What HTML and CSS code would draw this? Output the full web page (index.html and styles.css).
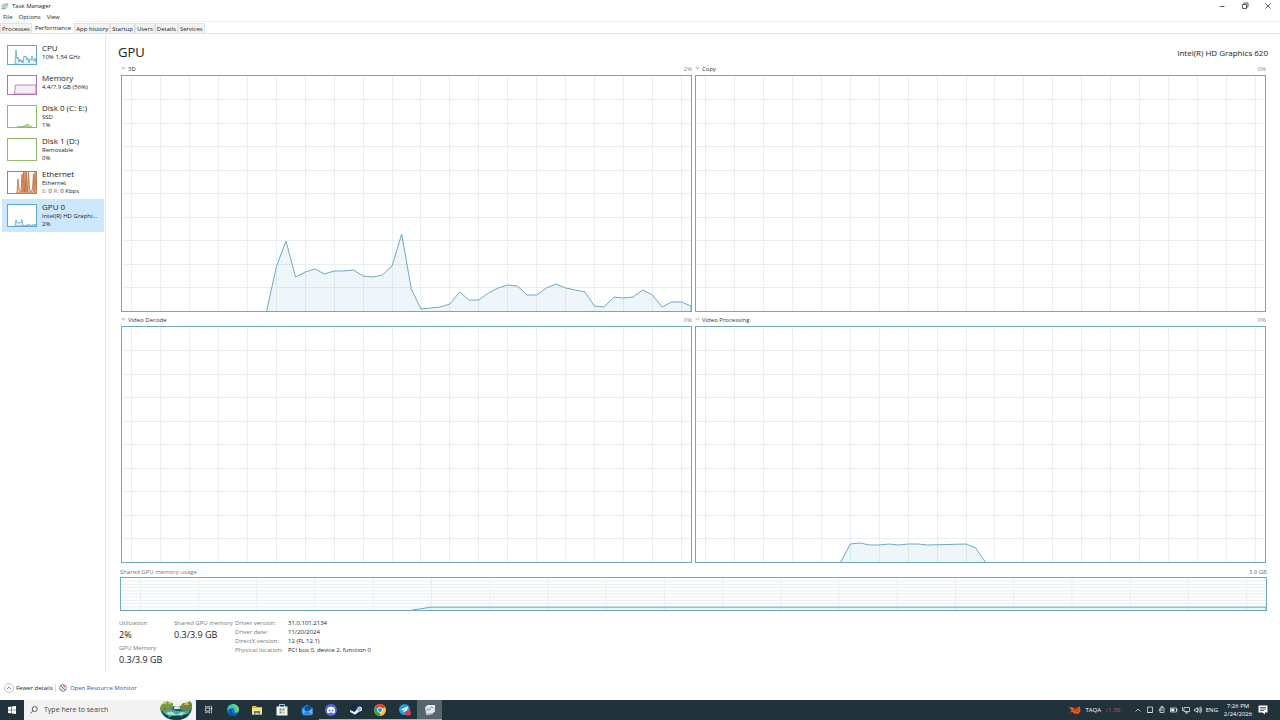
FILE: index.html
```html
<!DOCTYPE html>
<html lang="en">
<head>
<meta charset="utf-8">
<title>Task Manager</title>
<link rel="stylesheet" href="styles.css">
</head>
<body>

<!-- shared chart grid: 59 intervals wide, 10 rows high -->
<svg class="defs" aria-hidden="true">
	<symbol id="grid" viewBox="0 0 59 235" preserveAspectRatio="none">
		<path class="grid-line" d="M1 0v235M4 0v235M7 0v235M10 0v235M13 0v235M16 0v235M19 0v235M22 0v235M25 0v235M28 0v235M31 0v235M34 0v235M37 0v235M40 0v235M43 0v235M46 0v235M49 0v235M52 0v235M55 0v235M58 0v235"/>
		<path class="grid-line" d="M0 23.5h59M0 47h59M0 70.5h59M0 94h59M0 117.5h59M0 141h59M0 164.5h59M0 188h59M0 211.5h59"/>
	</symbol>
</svg>

<header class="titlebar">
	<svg class="app-icon" viewBox="0 0 18 16"><path d="M2 7l4-4h10l-3 9H3z" fill="#e3e9ec" stroke="#77858c"/><path d="M4 9l3-3 2 3 3-5 2 2" fill="none" stroke="#3c8fae" stroke-width="1.4"/><path d="M1 14h9" stroke="#77858c" stroke-width="2"/></svg>
	<h1>Task Manager</h1>
	<div class="window-buttons">
		<button aria-label="Minimize"><svg viewBox="0 0 8 8"><path d="M1.5 4.5h5"/></svg></button>
		<button aria-label="Restore"><svg viewBox="0 0 8 8"><path d="M1.5 2.5h4v4h-4zM3 2.500V1h4v4H5.500"/></svg></button>
		<button aria-label="Close"><svg viewBox="0 0 8 8"><path d="M1.500 1.500l5 5M6.500 1.500l-5 5"/></svg></button>
	</div>
</header>

<nav class="menu">
	<button>File</button>
	<button>Options</button>
	<button>View</button>
</nav>

<nav class="tabs">
	<button>Processes</button>
	<button class="active">Performance</button>
	<button>App history</button>
	<button>Startup</button>
	<button>Users</button>
	<button>Details</button>
	<button>Services</button>
</nav>

<main>
	<aside class="sidebar">
		<button class="device cpu">
			<svg class="thumb" viewBox="0 0 28 18" preserveAspectRatio="none"><path d="M7 18L8 4l1 9 1-2 1 5 1-3 1 3 1-2 1 3 1-7 1 1 1-1 1 4 1-2 1 5 1-4 1 1 1-4 1 4 1 1 1-3 1 4 1-2v6z"/></svg>
			<span class="info"><strong>CPU</strong><span>10% 1.54 GHz</span></span>
		</button>
		<button class="device memory">
			<svg class="thumb" viewBox="0 0 28 18" preserveAspectRatio="none"><path d="M6.500 18l1-9H28v9z"/></svg>
			<span class="info"><strong>Memory</strong><span>4.4/7.9 GB (56%)</span></span>
		</button>
		<button class="device disk">
			<svg class="thumb" viewBox="0 0 28 21" preserveAspectRatio="none"><path d="M9 21l2-1 2 1 3-1 1-1 1 1 1-2 2 1 1 1 2 1z"/></svg>
			<span class="info"><strong>Disk 0 (C: E:)</strong><span>SSD</span><span>1%</span></span>
		</button>
		<button class="device disk">
			<svg class="thumb" viewBox="0 0 28 21"></svg>
			<span class="info"><strong>Disk 1 (D:)</strong><span>Removable</span><span>0%</span></span>
		</button>
		<button class="device ethernet">
			<svg class="thumb" viewBox="0 0 28 21" preserveAspectRatio="none"><path d="M9 21l1-14 1 10 2 3 1-18 1 18 .500-20 1 20 .500-20 1 20 .500-20 1 20 1-20 1 17 1 3 2-3 1-15 .500 18 1-20 1 18 1 3z"/></svg>
			<span class="info"><strong>Ethernet</strong><span>Ethernet</span><span><i>S:</i> 0 <i>R:</i> 0 Kbps</span></span>
		</button>
		<button class="device gpu selected">
			<svg class="thumb" viewBox="0 0 28 21" preserveAspectRatio="none"><path d="M7 21l1-6 1 3 4-.500 1-3 1 6 2 .500 2-1 3-.500 1 1 3-1 2 .500v1z"/></svg>
			<span class="info"><strong>GPU 0</strong><span>Intel(R) HD Graphi...</span><span>2%</span></span>
		</button>
	</aside>

	<section class="details">
		<div class="heading">
			<h2>GPU</h2>
			<span>Intel(R) HD Graphics 620</span>
		</div>

		<div class="charts">
			<figure>
				<figcaption><button>3D</button><span>2%</span></figcaption>
				<svg class="chart" viewBox="0 0 59 235" preserveAspectRatio="none">
					<use href="#grid" width="59" height="235"/>
					<path class="series" d="M15 240V235L16 191L17 165L18 201L19 196L20 193L21 198L22 195L23 195L24 194L25 200L26 201L27 199L28 190L29 158L30 213L31 233L32 232L33 231L34 228L35 216L36 224L37 224L38 217L39 212L40 209L41 210L42 219L43 219L44 212L45 208L46 212L47 214L48 216L49 230L50 231L51 221L52 222L53 221L54 214L55 219L56 231L57 226L58 226L59 230V240z"/>
				</svg>
			</figure>
			<figure>
				<figcaption><button>Copy</button><span>0%</span></figcaption>
				<svg class="chart" viewBox="0 0 59 235" preserveAspectRatio="none">
					<use href="#grid" width="59" height="235"/>
				</svg>
			</figure>
			<figure>
				<figcaption><button>Video Decode</button><span>0%</span></figcaption>
				<svg class="chart" viewBox="0 0 59 235" preserveAspectRatio="none">
					<use href="#grid" width="59" height="235"/>
				</svg>
			</figure>
			<figure>
				<figcaption><button>Video Processing</button><span>0%</span></figcaption>
				<svg class="chart" viewBox="0 0 59 235" preserveAspectRatio="none">
					<use href="#grid" width="59" height="235"/>
					<path class="series" d="M15 240V235L16 217L17 216L18 218L19 218L20 217L21 218L22 217L23 217L24 218L28 217L29 221L30 235V240z"/>
				</svg>
			</figure>
		</div>

		<figure class="shared">
			<figcaption><span>Shared GPU memory usage</span><span>3.9 GB</span></figcaption>
			<svg class="chart" viewBox="0 0 59 235" preserveAspectRatio="none">
				<use href="#grid" width="59" height="235"/>
				<path class="series" d="M15 260V235L16 214H59V260z"/>
			</svg>
		</figure>

		<div class="stats">
			<dl class="figures">
				<dt>Utilization</dt>
				<dd>2%</dd>
				<dt>GPU Memory</dt>
				<dd>0.3/3.9 GB</dd>
			</dl>
			<dl class="figures">
				<dt>Shared GPU memory</dt>
				<dd>0.3/3.9 GB</dd>
			</dl>
			<dl class="driver">
				<dt>Driver version:</dt><dd>31.0.101.2134</dd>
				<dt>Driver date:</dt><dd>11/20/2024</dd>
				<dt>DirectX version:</dt><dd>12 (FL 12.1)</dd>
				<dt>Physical location:</dt><dd>PCI bus 0, device 2, function 0</dd>
			</dl>
		</div>
	</section>
</main>

<footer class="bottom">
	<button><svg viewBox="0 0 20 20"><circle cx="10" cy="10" r="9" fill="#fff" stroke="#8b8b8b"/><path d="M6 12l4-4 4 4" fill="none" stroke="#666" stroke-width="1.500"/></svg>Fewer details</button>
	<a href="#"><svg viewBox="0 0 20 20"><circle cx="10" cy="10" r="7" fill="#eef1f3" stroke="#8f9aa0" stroke-width="2"/><path d="M5 5l9 9M10 5l4 3" stroke="#c0413f" stroke-width="2"/><path d="M5 11l4 4" stroke="#6a93ad" stroke-width="2"/></svg>Open Resource Monitor</a>
</footer>

<div class="taskbar">
	<button class="start" aria-label="Start"><svg viewBox="0 0 16 16"><path fill="#fff" d="M0 2l7-1v6.500H0zM8 1l8-1v7.500H8zM0 8.500h7V15l-7-1zM8 8.500h8V16l-8-1z"/></svg></button>
	<label class="search">
		<svg class="glass" viewBox="0 0 16 16"><circle cx="9.500" cy="6" r="5"/><path d="M6 9.500L1 15"/></svg>
		<input type="text" placeholder="Type here to search" aria-label="Search">
		<svg class="lagoon" viewBox="0 0 34 20">
			<path d="M1 8q16-4 32 0q-2 12-16 12Q3 20 1 8z" fill="#17606a"/>
			<path d="M3 10q6-3 12 0t16-1l-2 5q-12 4-23 1z" fill="#43a7a2"/>
			<path d="M7 13q5-3 8 0t7-1l5 1-4 2H9z" fill="#a8ddd0"/>
			<path d="M3 12q5 5 13 4t14-2q-4 6-13 6Q7 19 3 12z" fill="#153e43"/>
			<path d="M1 8q1-5 5-4l2-3 3 2 3 0 0 5-4 2-8 1z" fill="#789c43"/>
			<path d="M21 7l3-4 4 0 3-2 2 3v5l-5 2-6-1z" fill="#638c3e"/>
			<path d="M3 4l3-3 2 3M9 4l3-3 1 3M25 5l3-4 2 4" fill="#d6b65d"/>
			<path d="M4 8l3-1v3l-3 1zM10 6l3 2-2 2zM26 7l3-1v4h-3z" fill="#9b6a3b"/>
			<path d="M15 7q2-2 6 0v2h-6z" fill="#d6e7db"/>
			<path d="M9 17l3-1M21 16l3-1" stroke="#5db574"/>
		</svg>
	</label>
	<div class="apps">
		<button aria-label="Task View"><svg viewBox="0 0 24 24"><path d="M4 2v3h11V2M4 22v-3h11v3M4 8h11v8H4zM20 2v5M20 11v11" fill="none" stroke="#dfe5e8" stroke-width="2"/><path d="M18 7h4v4h-4z" fill="#fff"/></svg></button>
		<button aria-label="Edge"><svg viewBox="0 0 24 24"><circle cx="12" cy="12" r="12" fill="#1479cc"/><path d="M1 9C4-3 23-2 24 11c0 5-5 7-9 5 2-2 1-7-4-8-5 0-8 2-10 5z" fill="#39c6b4"/><path d="M10 1c8-2 15 5 14 11-1 4-6 5-9 4 3-3 2-6 0-8z" fill="#69d568"/><path d="M10 10c-3 7 3 12 11 10-5 6-15 5-17-2-1-5 2-8 6-8z" fill="#0c529f"/></svg></button>
		<button aria-label="File Explorer"><svg viewBox="0 0 24 24"><path d="M2 4h8l2 2h10v15H2z" fill="#e5b53b"/><path d="M2 8h20v13H2z" fill="#ffdf79"/><path d="M6 14h12v7h-3v-3H9v3H6z" fill="#3e88b8"/></svg></button>
		<button aria-label="Microsoft Store"><svg viewBox="0 0 24 24"><path d="M7 6V1h10v5" fill="none" stroke="#8fd2ec" stroke-width="2"/><path d="M1 5h22v18H1z" fill="#f1f5f6"/><path d="M7 9h4v4H7z" fill="#df5539"/><path d="M13 9h4v4h-4z" fill="#72aa39"/><path d="M7 15h4v4H7z" fill="#2f99cb"/><path d="M13 15h4v4h-4z" fill="#e9ad2f"/></svg></button>
		<button aria-label="Mail"><svg viewBox="0 0 24 24"><path d="M2 8L12 1l11 7v12l-4 3H5l-4-5z" fill="#2685d8"/><path d="M2 9l10 7 11-8v13H5z" fill="#5cb9f3"/><path d="M9 5l9-2 3 7-9 6-5-4z" fill="#164d91"/><path d="M3 21l10-9 9 9z" fill="#278bdd"/></svg></button>
		<button class="running" aria-label="Discord"><svg viewBox="0 0 24 24"><circle cx="12" cy="12" r="12" fill="#5966dc"/><path d="M6 7q6-3 12 0 3 5 2 10l-4 2-2-2h-4l-2 2-4-2Q3 12 6 7z" fill="#fff"/><circle cx="9" cy="13" r="1.800" fill="#5966dc"/><circle cx="15" cy="13" r="1.800" fill="#5966dc"/></svg></button>
		<button class="running" aria-label="Steam"><svg viewBox="0 0 24 24"><circle cx="12" cy="12" r="12" fill="#142c46"/><path d="M0 12l9 4 5-6a5 5 0 1 1 5 5l-6 4a4 4 0 0 1-7 0l-6-3z" fill="#eef3f7"/><circle cx="18" cy="10" r="3" fill="#193650"/><circle cx="18" cy="10" r="1.800" fill="#fff"/></svg></button>
		<button class="running" aria-label="Chrome"><svg viewBox="0 0 24 24"><circle cx="12" cy="12" r="12" fill="#f6c62e"/><path d="M12 12L1.600 6a12 12 0 0 1 20.800 0z" fill="#df4434"/><path d="M12 12v12A12 12 0 0 1 1.600 6z" fill="#32a350"/><circle cx="12" cy="12" r="5.500" fill="#fff"/><circle cx="12" cy="12" r="4" fill="#4285e8"/></svg></button>
		<button class="running" aria-label="Telegram"><svg viewBox="0 0 24 24"><circle cx="11" cy="11" r="11" fill="#2b9cd3"/><path d="M3 11l15-6-3 13-4-3-2 2v-4z" fill="#fff"/><path d="M9 12l6-4-5 6z" fill="#2b9cd3"/><rect x="12" y="13" width="12" height="10" rx="4" fill="#dd3c48"/></svg></button>
		<button class="current" aria-label="Task Manager"><svg viewBox="0 0 24 24"><path d="M2 7l5-5h15v13l-5 4H4z" fill="#e2e7e9"/><path d="M5 14l3-5 3 4 4-8 4 4" fill="none" stroke="#91a2a9" stroke-width="2"/><path d="M4 21l13-2" stroke="#bbc6cb" stroke-width="3"/></svg></button>
	</div>
	<div class="tray">
		<button class="stock"><svg viewBox="0 0 24 16"><path d="M0 2l8 1 3 2 11-4 1 10-5 5-8-1-3-3-5 1 3-4z" fill="#e8571f"/><path d="M9 8l9-4M14 12l5-4" stroke="#8e2b12" stroke-width="2"/></svg><span>TAQA</span><em>↕1.38-</em></button>
		<div class="icons">
			<svg viewBox="0 0 16 16"><path d="M3 11l5-5 5 5"/></svg>
			<svg viewBox="0 0 16 16"><path d="M3 2h10v11H3zM3 13h10"/></svg>
			<svg viewBox="0 0 16 16"><path d="M4 4h8v9H4zM6 4V1h4v3M1 8h9"/></svg>
			<svg viewBox="0 0 16 16"><path d="M1 4h12v8H1zM14 6v4"/><path d="M3 6h5v4H3z" fill="#fff"/></svg>
			<svg viewBox="0 0 16 16"><path d="M4 3h11v8H4zM9 11v3M6 14h7M1 2v7h3"/></svg>
			<svg viewBox="0 0 16 16"><path d="M1 6h3l3-3v10l-3-3H1zM9 5q2 3 0 6M11 3q4 5 0 10M13 1q5 7 0 14"/></svg>
		</div>
		<span>ENG</span>
		<time>7:26 PM<br>2/24/2026</time>
		<button class="notifications" aria-label="Notifications"><svg viewBox="0 0 20 20"><path d="M1 1h18v14h-5v4l-5-4H1z" fill="#fff"/><path d="M4 5h12M4 8h12M4 11h8" stroke="#34444c" stroke-width="1.500"/></svg></button>
	</div>
</div>

</body>
</html>
```
FILE: styles.css
```css
* {
	box-sizing: border-box;
}

body {
	display: flex;
	flex-direction: column;
	height: 100vh;
	margin: 0;
	background: #fff;
	color: #222;
	font: 6px/8px "Open Sans", "Noto Sans", sans-serif;
}

h1, h2, dl, dd, figure {
	margin: 0;
	font-weight: normal;
}

button {
	margin: 0;
	padding: 0;
	border: 0;
	background: none;
	color: inherit;
	font: inherit;
	white-space: nowrap;
}

svg {
	display: block;
}

.defs {
	position: absolute;
	width: 0;
	height: 0;
}

/* window top */

.titlebar {
	display: flex;
	align-items: center;
	height: 12px;
	padding-left: 1px;
}

	.app-icon {
		width: 8px;
		height: 8px;
		margin-right: 3px;
	}

	.titlebar h1 {
		font-size: 6px;
	}

.window-buttons {
	display: flex;
	margin-left: auto;
}

	.window-buttons button {
		width: 23px;
		padding: 0 7px;
	}

	.window-buttons svg {
		width: 8px;
		height: 8px;
		fill: none;
		stroke: #333;
		stroke-width: .8;
	}

.menu {
	display: flex;
	gap: 6px;
	height: 9px;
	padding-left: 3px;
}

.tabs {
	display: flex;
	align-items: flex-end;
	height: 13px;
	border-top: 1px solid #f0f0f0;
	border-bottom: 1px solid #e4e4e4;
}

	.tabs button {
		height: 10px;
		padding: 0 1px;
		border: 1px solid #e2e2e2;
		border-bottom: 0;
		background: #f3f3f3;
		line-height: 10px;
	}

	.tabs .active {
		height: 12px;
		padding: 0 2px;
		border-color: #fff;
		background: #fff;
	}

main {
	display: flex;
	flex: 1;
	min-height: 0;
}

/* device list */

.sidebar {
	width: 106px;
	padding: 6px 2px 0;
	border-right: 1px solid #e8e8e8;
}

.device {
	display: flex;
	gap: 5px;
	width: 102px;
	height: 33px;
	padding: 3px 5px;
	text-align: left;
}

.cpu, .memory {
	height: 30px;
}

.selected {
	background: #cce8ff;
}

.thumb {
	flex: none;
	width: 30px;
	height: 23px;
	margin-top: 2px;
	border: 1px solid;
	background: #fff;
	fill: none;
	stroke: currentColor;
	stroke-width: .8;
}

	.cpu .thumb, .memory .thumb {
		height: 20px;
	}

	.cpu .thumb, .gpu .thumb {
		color: #5fa6ca;
		fill: #e4f1f9;
	}

	.memory .thumb {
		color: #b06fba;
		fill: #f5ecf7;
	}

	.disk .thumb {
		color: #90b96a;
		fill: #b9dc98;
	}

	.ethernet .thumb {
		border-color: #b07c5a;
		color: #bd6a36;
		fill: #ecc5a8;
	}

.info {
	min-width: 0;
}

	.info strong, .info > span {
		display: block;
	}

	.info strong {
		font-weight: normal;
		font-size: 8px;
		line-height: 10px;
	}

	.info i {
		color: #888;
		font-style: normal;
	}

/* charts */

.details {
	display: flex;
	flex: 1;
	flex-direction: column;
	padding: 10px 12px 6px;
}

.heading {
	display: flex;
	align-items: center;
	justify-content: space-between;
	height: 17px;
	font-size: 8px;
}

	.heading h2 {
		font-size: 13px;
		line-height: 17px;
	}

.charts {
	display: grid;
	flex: 1 1 0px;
	grid-template-columns: 1fr 1fr;
	grid-template-rows: minmax(0, 1fr) minmax(0, 1fr);
	column-gap: 3px;
	min-height: 0;
	margin: 0 2px 0 3px;
}

figure {
	display: flex;
	flex-direction: column;
	min-height: 0;
}

figcaption {
	display: flex;
	flex: none;
	align-items: center;
	justify-content: space-between;
	height: 14px;
	padding-top: 2px;
	color: #888;
}

	figcaption button {
		color: #333;
	}

	figcaption button::before {
		content: "";
		display: inline-block;
		width: 2px;
		height: 2px;
		margin: 0 3px 2px 1px;
		border: solid #bbb;
		border-width: 0 1px 1px 0;
		transform: rotate(45deg);
	}

.chart {
	flex: 1 1 0px;
	width: 100%;
	min-height: 0;
	border: 1px solid #6ea9c4;
}

.grid-line {
	fill: none;
	stroke: #e8eff3;
	stroke-width: 1px;
	shape-rendering: crispEdges;
	vector-effect: non-scaling-stroke;
}

.series {
	fill: rgba(17, 125, 187, .07);
	stroke: #6ea9c4;
	stroke-width: 1px;
	vector-effect: non-scaling-stroke;
}

.shared {
	flex: none;
	margin: 0 1px 0 2px;
}

	.shared figcaption {
		padding-top: 4px;
		color: #777;
	}

	.shared .chart {
		flex: none;
		height: 34px;
	}

.stats {
	display: flex;
	padding: 7px 0 0 1px;
}

dt {
	color: #777;
}

.figures {
	width: 55px;
	white-space: nowrap;
}

	.figures + .figures {
		width: 61px;
	}

	.figures dt {
		line-height: 10px;
	}

	.figures dd {
		margin-bottom: 2px;
		font-size: 9px;
		line-height: 13px;
	}

	.figures dd:last-child {
		margin-bottom: 0;
	}

.driver {
	display: grid;
	grid-template-columns: 53px auto;
	align-content: start;
	padding-top: 1px;
	line-height: 9px;
}

/* window bottom */

.bottom {
	display: flex;
	align-items: center;
	height: 28px;
	padding: 3px 4px 0;
}

	.bottom button, .bottom a {
		display: flex;
		align-items: center;
		gap: 2px;
		height: 8px;
	}

	.bottom svg {
		width: 10px;
		height: 10px;
	}

	.bottom a {
		margin-left: 2px;
		padding-left: 2px;
		border-left: 1px solid #ddd;
		color: #0a64bd;
		text-decoration: none;
	}

.taskbar {
	display: flex;
	height: 20px;
	background: #21323a;
	color: #fff;
}

.start {
	width: 24px;
	padding: 0 8px;
}

	.start svg {
		width: 8px;
		height: 8px;
	}

.search {
	display: flex;
	align-items: center;
	width: 172px;
	padding: 0 3px 0 6px;
	background: #f2f2f2;
}

	.glass {
		flex: none;
		width: 8px;
		height: 8px;
		fill: none;
		stroke: #333;
		stroke-width: 1.5;
	}

	.search input {
		flex: 1;
		min-width: 0;
		padding: 0 0 0 6px;
		border: 0;
		outline: 0;
		background: none;
		font: 7px/10px "Open Sans", "Noto Sans", sans-serif;
	}

	.search input::placeholder {
		color: #444;
	}

	.lagoon {
		flex: none;
		width: 34px;
		height: 20px;
	}

.apps {
	display: flex;
	width: 246px;
}

	.apps button {
		display: flex;
		flex: 1;
		align-items: center;
		justify-content: center;
		border-bottom: 1px solid transparent;
	}

	.apps svg {
		width: 12px;
		height: 12px;
	}

	.apps button:first-child svg {
		width: 9px;
		height: 9px;
	}

	.apps .running {
		border-color: #d69d96;
	}

	.apps .current {
		border-color: #a9b5ba;
		background: #56646b;
	}

.tray {
	display: flex;
	align-items: center;
	margin-left: auto;
	padding-right: 12px;
}

.stock {
	display: flex;
	align-items: center;
	gap: 4px;
	margin-right: 12px;
}

	.stock svg {
		width: 12px;
		height: 8px;
	}

	.stock em {
		color: #d6505d;
		font-style: normal;
	}

.icons {
	display: flex;
	gap: 4px;
	margin-right: 4px;
}

	.icons svg {
		width: 8px;
		height: 8px;
		fill: none;
		stroke: #e5eaec;
		stroke-width: 1.5;
	}

.tray time {
	width: 40px;
	text-align: center;
}

.notifications svg {
	width: 10px;
	height: 10px;
}
```
